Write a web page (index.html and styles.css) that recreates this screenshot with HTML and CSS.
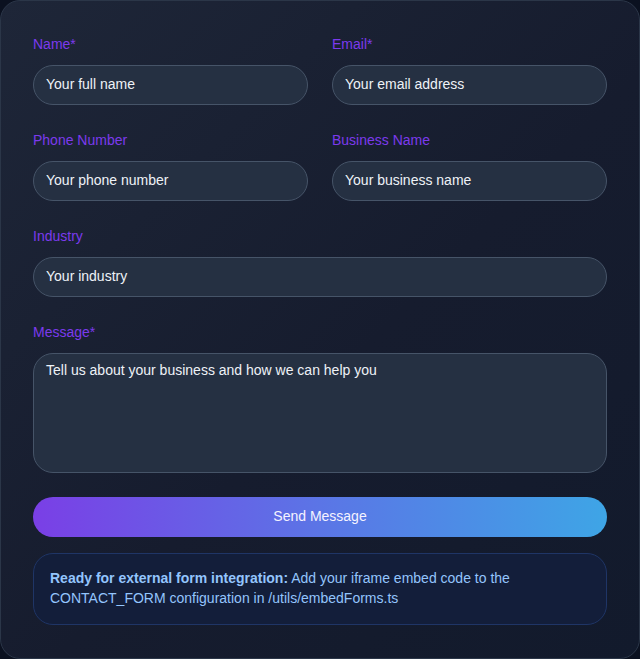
FILE: index.html
```
<!DOCTYPE html>
<html lang="en">
<head>
<meta charset="utf-8">
<title>Contact Form</title>
<link rel="stylesheet" href="styles.css">
</head>
<body>
<div class="card">
  <form class="form">
    <div class="row">
      <div class="field">
        <label class="label">Name*</label>
        <input class="input" type="text" placeholder="Your full name">
      </div>
      <div class="field">
        <label class="label">Email*</label>
        <input class="input" type="email" placeholder="Your email address">
      </div>
    </div>
    <div class="row">
      <div class="field">
        <label class="label">Phone Number</label>
        <input class="input" type="text" placeholder="Your phone number">
      </div>
      <div class="field">
        <label class="label">Business Name</label>
        <input class="input" type="text" placeholder="Your business name">
      </div>
    </div>
    <div class="field">
      <label class="label">Industry</label>
      <input class="input" type="text" placeholder="Your industry">
    </div>
    <div class="field">
      <label class="label">Message*</label>
      <textarea class="input textarea" placeholder="Tell us about your business and how we can help you"></textarea>
    </div>
    <button class="btn" type="button">Send Message</button>
    <div class="info"><strong>Ready for external form integration:</strong> Add your iframe embed code to the CONTACT_FORM configuration in /utils/embedForms.ts</div>
  </form>
</div>
</body>
</html>
```
FILE: styles.css
```
* { box-sizing: border-box; }
html, body { margin: 0; padding: 0; }
body {
  background: #0b1120;
  font-family: "Liberation Sans", Arial, sans-serif;
  width: 640px;
  height: 659px;
}
.card {
  width: 640px;
  height: 659px;
  border: 1px solid #2b3648;
  border-radius: 20px;
  background: linear-gradient(135deg, #1e2638 0%, #161c2e 55%, #121a2c 100%);
  padding: 32px;
}
.form {
  display: flex;
  flex-direction: column;
  gap: 24px;
}
.row {
  display: grid;
  grid-template-columns: 1fr 1fr;
  gap: 24px;
}
.field {
  display: flex;
  flex-direction: column;
  gap: 11px;
}
.label {
  font-size: 14px;
  line-height: 20px;
  margin-top: 1px;
  color: #7c3aed;
}
.input {
  height: 40px;
  border-radius: 20px;
  border: 1px solid #465468;
  background: #253042;
  color: #f1f5f9;
  font-family: "Liberation Sans", Arial, sans-serif;
  font-size: 14px;
  padding: 0 12px 3px;
  outline: none;
}
.input::placeholder { color: #eef2f7; opacity: 1; }
.textarea {
  height: 120px;
  padding: 6px 12px;
  line-height: 20px;
  resize: none;
}
.btn {
  height: 40px;
  border: none;
  border-radius: 20px;
  background: linear-gradient(90deg, #7a3fe6 0%, #5b75e6 50%, #3ea5e6 100%);
  color: #f5f3ff;
  font-family: "Liberation Sans", Arial, sans-serif;
  font-size: 14px;
  padding: 0 0 3px;
}
.info {
  margin-top: -8px;
  border: 1px solid #1f3566;
  border-radius: 20px;
  background: #131e3a;
  padding: 14px 16px 16px;
  font-size: 14px;
  line-height: 20px;
  color: #93c5fd;
}
.info strong { font-weight: 700; }
```
